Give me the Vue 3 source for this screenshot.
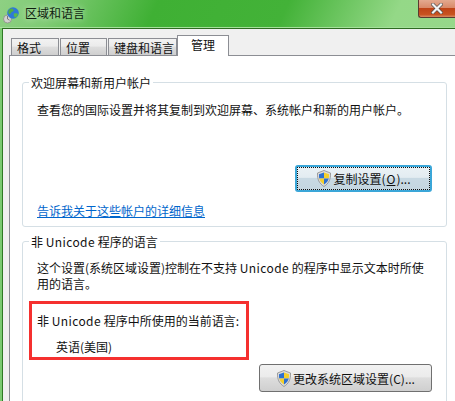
<script setup>
const tabs = ['格式', '位置', '键盘和语言']
</script>

<template>
  <div class="window">
    <div class="titlebar">
      <svg class="globe" width="18" height="18" viewBox="0 0 18 18">
        <circle cx="4.500" cy="13" r="4" fill="#d2d2ce" stroke="#8b8b88" stroke-width="0.8" />
        <path d="M4.500 10v3l2 1.200" fill="none" stroke="#666" stroke-width="0.8" />
        <circle cx="10" cy="7" r="5.800" fill="#2f78d8" />
        <path d="M6 3.500c2-1.500 3.500-1.300 4.500 0 .8 1-.5 2-1.800 2.500-1.200.5-.8 2.500-2.200 2.200C5 7.800 5 5.500 6 3.500z" fill="#4fae45" />
        <path d="M11 7.500c1.800-.5 3.500 0 4 .7-.5 1.800-1.800 3-3 3.400-1-1.200-1.800-2.800-1-4.100z" fill="#58b84c" />
      </svg>
      <span class="title">区域和语言</span>
      <div class="close">
        <svg width="12" height="11" viewBox="0 0 12 11">
          <path d="M2 1.500l8 8M10 1.500l-8 8" stroke="#4a4a4a" stroke-width="3.400" stroke-linecap="square" />
          <path d="M2 1.500l8 8M10 1.500l-8 8" stroke="#f4f4f4" stroke-width="2.200" stroke-linecap="square" />
        </svg>
      </div>
    </div>
    <div class="client">
      <div class="tabstrip">
        <div v-for="t in tabs" :key="t" class="tab">{{ t }}</div>
        <div class="tab active">管理</div>
      </div>
      <div class="panel">
        <section class="group first">
          <h3 class="legend">欢迎屏幕和新用户帐户</h3>
          <p class="desc">查看您的国际设置并将其复制到欢迎屏幕、系统帐户和新的用户帐户。</p>
          <div class="actions top-actions">
            <button class="btn focused">
              <span class="focus-ring">
                <svg class="shield" width="16" height="17" viewBox="0 0 16 17">
                  <path d="M8 .5 14.500 3c.3 6-1.500 10.500-6.500 13.500C3 13.500 1.200 9 1.500 3z" fill="#dcdcdc" stroke="#8c8c8c" stroke-width="0.8" />
                  <path d="M8 2.500V8.500H3.200C3 6.500 3 5.500 3 4.200z" fill="#2c6fd1" />
                  <path d="M8 2.500 13 4.200c0 1.300 0 2.300-.2 4.300H8z" fill="#f4cf2c" />
                  <path d="M3.200 8.500H8v6C5.500 13 4 11 3.200 8.500z" fill="#f4cf2c" />
                  <path d="M8 8.500h4.800C12 11 10.500 13 8 14.500z" fill="#2c6fd1" />
                </svg>
                复制设置(<u>O</u>)...
              </span>
            </button>
          </div>
          <a class="link">告诉我关于这些帐户的详细信息</a>
        </section>
        <section class="group second">
          <h3 class="legend">非 <span class="latin">Unicode</span> 程序的语言</h3>
          <p class="desc"><span>这个设置(系统区域设置)控制在不支持 </span><span class="latin">Unicode</span><span> 的程序中显示文本时所使</span><br /><span>用的语言。</span></p>
          <p class="current">非 <span class="latin">Unicode</span> 程序中所使用的当前语言:</p>
          <p class="lang">英语(美国)</p>
          <div class="actions">
            <button class="btn plain">
              <svg class="shield" width="16" height="17" viewBox="0 0 16 17">
                <path d="M8 .5 14.500 3c.3 6-1.500 10.500-6.500 13.500C3 13.500 1.200 9 1.500 3z" fill="#dcdcdc" stroke="#8c8c8c" stroke-width="0.8" />
                <path d="M8 2.500V8.500H3.200C3 6.500 3 5.500 3 4.200z" fill="#2c6fd1" />
                <path d="M8 2.500 13 4.200c0 1.300 0 2.300-.2 4.300H8z" fill="#f4cf2c" />
                <path d="M3.200 8.500H8v6C5.500 13 4 11 3.200 8.500z" fill="#f4cf2c" />
                <path d="M8 8.500h4.800C12 11 10.500 13 8 14.500z" fill="#2c6fd1" />
              </svg>
              更改系统区域设置(C)...
            </button>
          </div>
          <div class="annotation"></div>
        </section>
      </div>
    </div>
  </div>
</template>

<style>
html, body { margin: 0; padding: 0; overflow: hidden; }
</style>

<style scoped>
.window {
  width: 455px;
  height: 401px;
  display: flex;
  flex-direction: column;
  overflow: hidden;
  font-family: "Noto Sans CJK SC", "Noto Sans", sans-serif;
  font-size: 12px;
  color: #111;
  background: linear-gradient(90deg, #7ccb72 0, #5fbe55 100%);
}
.titlebar {
  height: 28px;
  flex: none;
  display: flex;
  align-items: center;
  position: relative;
  padding: 0 0 2px 3px;
  box-sizing: border-box;
  border-bottom: 1px solid #a4e09a;
  background: linear-gradient(115deg, #8ed083 0, #7fcb74 12%, #3fb034 34%, #43b238 62%, #94d887 86%, #96d88a 100%);
}
.globe { flex: none; margin: 4px 4px 0 0; }
.title { font-size: 12px; color: #0f1f0f; text-shadow: 0 0 6px rgba(255,255,255,.7); }
.close {
  position: absolute;
  right: 0;
  top: 0;
  width: 37px;
  height: 18px;
  box-sizing: border-box;
  border: 1px solid #5a3a30;
  border-top: none;
  border-right: none;
  border-radius: 0 0 0 3px;
  background: linear-gradient(180deg, #e3a98f 0, #d98a6a 45%, #bf4417 50%, #c8521f 85%, #d98a60 100%);
  display: flex;
  align-items: center;
  justify-content: center;
}
.client {
  flex: 1;
  min-height: 0;
  display: flex;
  flex-direction: column;
  margin-left: 2px;
  padding-left: 6px;
  background: #f0f0f0;
  border-top: 1px solid #2e6b22;
  border-left: 1px solid #2f7a25;
}
.tabstrip {
  height: 26px;
  flex: none;
  display: flex;
  align-items: flex-end;
  padding-left: 2px;
  box-sizing: border-box;
}
.tab {
  height: 17px;
  box-sizing: border-box;
  padding-left: 5px;
  margin-right: 1px;
  line-height: 17px;
  border: 1px solid #8c8e94;
  border-bottom: none;
  background: linear-gradient(180deg, #f2f2f2 0, #ebebeb 45%, #dddddd 50%, #cfcfcf 100%);
  white-space: nowrap;
}
.tab:nth-child(1) { width: 48px; }
.tab:nth-child(2) { width: 47px; }
.tab:nth-child(3) { width: 69px; margin-right: 0; }
.tab.active {
  height: 21px;
  width: 52px;
  padding-left: 0;
  margin-right: 0;
  text-align: center;
  line-height: 18px;
  background: #fff;
  position: relative;
  top: 1px;
  z-index: 1;
}
.panel {
  flex: 1;
  min-height: 0;
  background: #fff;
  border-top: 1px solid #8c8e94;
  border-left: 1px solid #8c8e94;
  padding: 26px 8px 0 12px;
  display: flex;
  flex-direction: column;
  gap: 14px;
  box-sizing: border-box;
}
.group {
  position: relative;
  border: 1px solid #d5dfe5;
  border-radius: 3px;
  padding: 0 0 0 14px;
  box-sizing: border-box;
  flex: none;
}
.group.first { height: 145px; }
.group.second { height: 200px; }
.legend {
  position: absolute;
  left: 6px;
  top: -9px;
  margin: 0;
  padding: 0 2px;
  background: #fff;
  font-size: 12px;
  font-weight: 400;
  line-height: 17px;
}
.latin { letter-spacing: .4px; }
.desc { margin: 18px 0 0; line-height: 16px; white-space: nowrap; }
.first .desc { margin-top: 19px; }
.actions { display: flex; justify-content: flex-end; padding-right: 14px; }
.top-actions { margin-top: 47px; }
.btn {
  font: inherit;
  color: #111;
  box-sizing: border-box;
  height: 27px;
  width: 137px;
  border-radius: 3px;
  padding: 0;
  display: flex;
  align-items: center;
  justify-content: center;
  gap: 1px;
}
.btn.focused {
  border: 2px solid #3aa6d8;
  background: linear-gradient(180deg, #eaf1f5 0, #e3ecf1 45%, #c8d9e3 50%, #c4d6e0 100%);
}
.focus-ring {
  box-sizing: border-box;
  width: 100%;
  height: 100%;
  border: 1px dotted #111;
  display: flex;
  align-items: center;
  justify-content: center;
  gap: 1px;
}
.btn.plain {
  width: 173px;
  height: 28px;
  border: 1px solid #707070;
  background: linear-gradient(180deg, #f2f2f2 0, #ebebeb 45%, #dddddd 50%, #cfcfcf 100%);
}
.shield { flex: none; }
.link { display: block; margin-top: 10px; color: #0066cc; text-decoration: underline; line-height: 17px; }
.current { margin: 20px 0 0; line-height: 17px; }
.lang { margin: 9px 0 0 19px; line-height: 17px; }
.second .actions { margin-top: 9px; }
.annotation {
  position: absolute;
  left: 6px;
  top: 59px;
  width: 220px;
  height: 59px;
  box-sizing: border-box;
  border: 3px solid #f5302f;
  pointer-events: none;
}
</style>
